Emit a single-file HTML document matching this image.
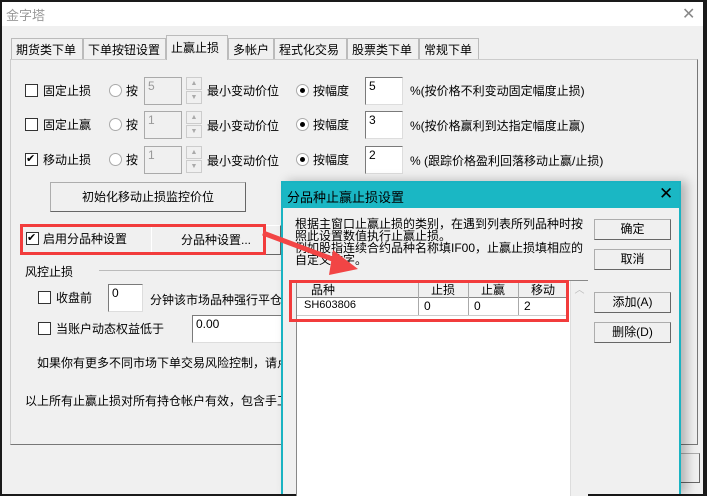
<!DOCTYPE html>
<html><head><meta charset="utf-8"><style>
*{box-sizing:border-box;margin:0;padding:0}
body{width:707px;height:494px;position:relative;overflow:hidden;background:#1a1a1a;font-family:"Liberation Sans","Noto Sans CJK SC",sans-serif;font-size:12px;color:#000}
.a{position:absolute;white-space:nowrap}
.win{left:2px;top:2px;width:701px;height:492px;background:#f0f0f0}
.tb{left:2px;top:2px;width:701px;height:24px;background:#fff}
.cb{width:13px;height:13px;border:1px solid #333;background:#fff}
.rd{width:13px;height:13px;border:1px solid #aaa;border-radius:50%;background:#fff}
.rd.on::after{content:"";position:absolute;left:3px;top:3px;width:5px;height:5px;border-radius:50%;background:#000}
.ed{border:1px solid #7a7a7a;border-right-color:#ddd;border-bottom-color:#ddd;background:#fff;padding:1px 3px;height:28px}
.ed.dis{background:#f0f0f0;color:#999;border-color:#aaa}
.sp{width:16px;height:13px;border:1px solid #ccc;background:#f0f0f0;font-size:7px;color:#aaa;text-align:center;line-height:11px}
.btn{border:1px solid #adadad;border-right-color:#666;border-bottom-color:#666;background:#f0f0f0;text-align:center}
.tab{top:38px;height:21px;border:1px solid #bbb;border-bottom:none;background:#f0f0f0;padding:2px 4px 0;font-size:12px}
.dlg{left:281px;top:181px;width:400px;height:313px;background:#f0f0f0;border:2px solid #1ab3c2;border-bottom:none;box-shadow:6px 0 10px rgba(0,0,0,.25)}
.red{border:3px solid #f23c3c}
</style></head><body>
<div class="a win"></div>
<div class="a tb"></div>
<div class="a" style="left:6px;top:5px;color:#999;font-size:13px">金字塔</div>
<div class="a" style="left:682px;top:4px;color:#888;font-size:16px">✕</div>
<!-- tabs -->
<div class="a" style="left:10px;top:59px;width:688px;height:386px;border:1px solid #ccc;border-right-color:#777;border-bottom-color:#777"></div>
<div class="a tab" style="left:11px;width:72px">期货类下单</div>
<div class="a tab" style="left:83px;width:83px">下单按钮设置</div>
<div class="a tab" style="left:166px;top:35px;height:25px;width:62px;background:#f0f0f0;z-index:2;padding-top:3px">止赢止损</div>
<div class="a tab" style="left:228px;width:46px">多帐户</div>
<div class="a tab" style="left:274px;width:73px">程式化交易</div>
<div class="a tab" style="left:347px;width:72px">股票类下单</div>
<div class="a tab" style="left:419px;width:60px">常规下单</div>
<!-- rows -->
<div class="a cb" style="left:25px;top:84px"></div><div class="a" style="left:43px;top:82px">固定止损</div>
<div class="a rd" style="left:109px;top:84px"></div><div class="a" style="left:126px;top:82px">按</div>
<div class="a ed dis" style="left:144px;top:77px;width:38px">5</div>
<div class="a sp" style="left:186px;top:77px">▲</div><div class="a sp" style="left:186px;top:91px">▼</div>
<div class="a" style="left:207px;top:82px">最小变动价位</div>
<div class="a rd on" style="left:296px;top:84px"></div><div class="a" style="left:313px;top:82px">按幅度</div>
<div class="a ed" style="left:365px;top:77px;width:38px">5</div>
<div class="a" style="left:410px;top:82px">%(按价格不利变动固定幅度止损)</div>

<div class="a cb" style="left:25px;top:118px"></div><div class="a" style="left:43px;top:116px">固定止赢</div>
<div class="a rd" style="left:109px;top:118px"></div><div class="a" style="left:126px;top:116px">按</div>
<div class="a ed dis" style="left:144px;top:111px;width:38px">1</div>
<div class="a sp" style="left:186px;top:111px">▲</div><div class="a sp" style="left:186px;top:125px">▼</div>
<div class="a" style="left:207px;top:117px">最小变动价位</div>
<div class="a rd on" style="left:296px;top:118px"></div><div class="a" style="left:313px;top:116px">按幅度</div>
<div class="a ed" style="left:365px;top:111px;width:38px">3</div>
<div class="a" style="left:410px;top:117px">%(按价格赢利到达指定幅度止赢)</div>

<div class="a cb" style="left:25px;top:153px;font-size:11px;line-height:10px">✔</div><div class="a" style="left:43px;top:151px">移动止损</div>
<div class="a rd" style="left:109px;top:153px"></div><div class="a" style="left:126px;top:151px">按</div>
<div class="a ed dis" style="left:144px;top:146px;width:38px">1</div>
<div class="a sp" style="left:186px;top:146px">▲</div><div class="a sp" style="left:186px;top:160px">▼</div>
<div class="a" style="left:207px;top:152px">最小变动价位</div>
<div class="a rd on" style="left:296px;top:153px"></div><div class="a" style="left:313px;top:151px">按幅度</div>
<div class="a ed" style="left:365px;top:146px;width:38px">2</div>
<div class="a" style="left:410px;top:152px">% (跟踪价格盈利回落移动止赢/止损)</div>

<div class="a btn" style="left:50px;top:182px;width:196px;height:30px;line-height:28px">初始化移动止损监控价位</div>
<div class="a cb" style="left:26px;top:232px;font-size:11px;line-height:10px">✔</div><div class="a" style="left:43px;top:230px">启用分品种设置</div>
<div class="a btn" style="left:151px;top:225px;width:130px;height:30px;line-height:28px;border-left-color:#fff;border-top-color:#fff">分品种设置...</div>
<div class="a red" style="left:20px;top:224px;width:246px;height:31px"></div>
<div class="a" style="left:25px;top:263px">风控止损</div>
<div class="a" style="left:99px;top:270px;width:190px;border-top:1px solid #bbb"></div>
<div class="a cb" style="left:38px;top:291px"></div><div class="a" style="left:56px;top:289px">收盘前</div>
<div class="a ed" style="left:108px;top:284px;width:35px">0</div>
<div class="a" style="left:150px;top:291px">分钟该市场品种强行平仓</div>
<div class="a cb" style="left:38px;top:322px"></div><div class="a" style="left:56px;top:320px">当账户动态权益低于</div>
<div class="a ed" style="left:192px;top:315px;width:100px">0.00</div>
<div class="a" style="left:37px;top:354px">如果你有更多不同市场下单交易风险控制，请点</div>
<div class="a" style="left:25px;top:392px">以上所有止赢止损对所有持仓帐户有效，包含手工</div>
<div class="a btn" style="left:680px;top:453px;width:20px;height:30px"></div>
<!-- dialog -->
<div class="a dlg">
 <div class="a" style="left:0;top:0;width:396px;height:25px;background:#1ab7c4"></div>
 <div class="a" style="left:4px;top:4px;font-size:13px">分品种止赢止损设置</div>
 <div class="a" style="left:376px;top:1px;font-size:17px">✕</div>
 <div class="a" style="left:12px;top:35px;line-height:12px;font-size:12px">根据主窗口止赢止损的类别，在遇到列表所列品种时按<br>照此设置数值执行止赢止损。<br>例如股指连续合约品种名称填IF00，止赢止损填相应的<br>自定义数字。</div>
 <div class="a btn" style="left:311px;top:36px;width:77px;height:21px;line-height:19px">确定</div>
 <div class="a btn" style="left:311px;top:66px;width:77px;height:21px;line-height:19px">取消</div>
 <div class="a btn" style="left:311px;top:109px;width:77px;height:21px;line-height:19px">添加(A)</div>
 <div class="a btn" style="left:311px;top:139px;width:77px;height:21px;line-height:19px">删除(D)</div>
 <div class="a" style="left:13px;top:97px;width:292px;height:216px;border:1px solid #888;border-bottom:none;background:#fff"></div>
 <div class="a" style="left:287px;top:98px;width:18px;height:215px;background:#f0f0f0;border-left:1px solid #ddd;color:#bbb;text-align:center;font-size:10px">︿</div>
 <div class="a" style="left:14px;top:98px;width:272px;height:17px;background:#f0f0f0;border-bottom:1px solid #888"></div>
 <div class="a" style="left:28px;top:98px">品种</div>
 <div class="a" style="left:135px;top:98px;width:1px;height:34px;background:#aaa"></div>
 <div class="a" style="left:185px;top:98px;width:1px;height:34px;background:#aaa"></div>
 <div class="a" style="left:235px;top:98px;width:1px;height:34px;background:#aaa"></div>
 <div class="a" style="left:148px;top:98px">止损</div>
 <div class="a" style="left:198px;top:98px">止赢</div>
 <div class="a" style="left:248px;top:98px">移动</div>
 <div class="a" style="left:14px;top:132px;width:272px;border-top:1px solid #ccc"></div>
 <div class="a" style="left:21px;top:116px;font-size:11px">SH603806</div>
 <div class="a" style="left:141px;top:116px">0</div>
 <div class="a" style="left:191px;top:116px">0</div>
 <div class="a" style="left:241px;top:116px">2</div>
 <div class="a red" style="left:6px;top:97px;width:280px;height:42px"></div>
</div>
<svg class="a" style="left:255px;top:225px" width="110" height="60"><path d="M8 8 L88 38" stroke="#f24545" stroke-width="5"/><polygon points="78,25 103,44 74,50" fill="#f24545"/></svg>
</body></html>
